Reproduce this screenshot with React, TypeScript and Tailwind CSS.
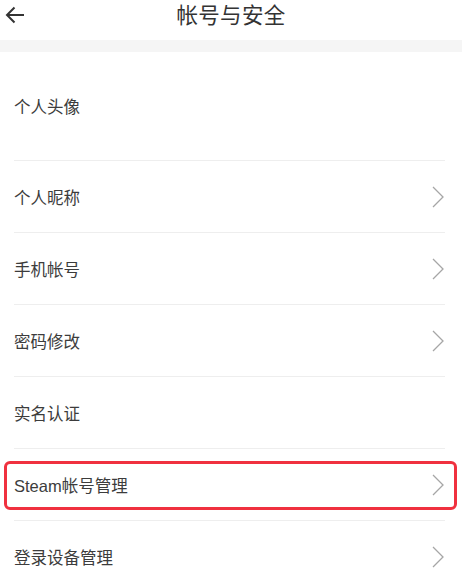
const rows = [
  { label: "个人昵称", arrow: true },
  { label: "手机帐号", arrow: true },
  { label: "密码修改", arrow: true },
  { label: "实名认证", arrow: false },
  { label: "Steam帐号管理", arrow: true, highlight: true },
  { label: "登录设备管理", arrow: true },
];

function Chevron() {
  return (
    <svg width="12" height="22" viewBox="0 0 12 22" fill="none">
      <path d="M1 1 L11 11 L1 21" stroke="#a6a6a6" strokeWidth="1.3" />
    </svg>
  );
}

export default function App() {
  return (
    <div
      className="w-[462px] h-[586px] overflow-hidden bg-white text-[#3c3c3c]"
      style={{ fontFamily: '"Liberation Sans", "Noto Sans CJK SC", sans-serif' }}
    >
      <div className="relative flex h-[40px] items-center justify-center pb-[7px]">
        <svg className="absolute left-[5px] top-[5px]" width="20" height="20" viewBox="0 0 20 20" fill="none">
          <path d="M19 10 H2 M9.5 2.5 L2 10 L9.5 17.5" stroke="#333" strokeWidth="2" />
        </svg>
        <h1 className="text-[21.5px] leading-none tracking-[0.3px] text-[#333]">帐号与安全</h1>
      </div>
      <div className="h-[12px] bg-[#f5f5f5]" />

      <div className="ml-[14px] mr-[17px] flex h-[109px] items-center border-b border-[#eeeeee] pt-[3px]">
        <span className="text-[16.5px]">个人头像</span>
      </div>

      {rows.map((row) => (
        <div key={row.label} className="relative">
          <div className="ml-[14px] mr-[17px] flex h-[72px] items-center justify-between border-b border-[#eeeeee] pr-[1px]">
            <span className="pt-[3px] text-[16.5px]">{row.label}</span>
            {row.arrow && <Chevron />}
          </div>
          {row.highlight && (
            <div className="absolute left-[4px] right-[5px] top-[12px] bottom-[11px] rounded-[6px] border-[3px] border-[#f0313f]" />
          )}
        </div>
      ))}
    </div>
  );
}
